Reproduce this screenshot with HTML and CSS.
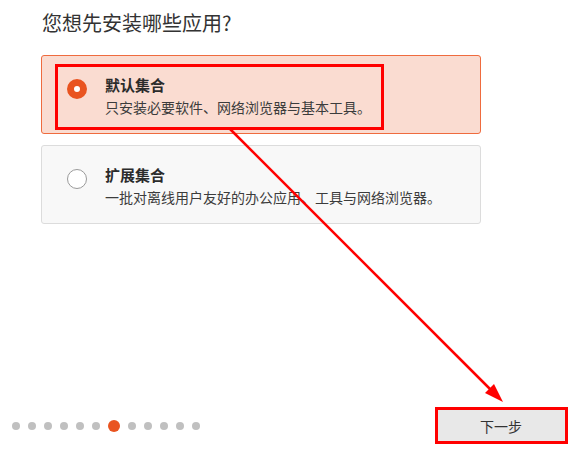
FILE: index.html
```html
<!DOCTYPE html>
<html lang="zh-CN">
<head>
    <meta charset="UTF-8">
    <title>安装应用</title>
    <link rel="stylesheet" href="styles.css">
</head>
<body>
    <div class="page">
        <h1 class="title">您想先安装哪些应用?</h1>

        <div class="option selected">
            <span class="radio"></span>
            <div class="text">
                <div class="name">默认集合</div>
                <div class="desc">只安装必要软件、网络浏览器与基本工具。</div>
            </div>
        </div>

        <div class="option">
            <span class="radio"></span>
            <div class="text">
                <div class="name">扩展集合</div>
                <div class="desc">一批对离线用户友好的办公应用、工具与网络浏览器。</div>
            </div>
        </div>

        <div class="footer">
            <div class="dots">
                <span class="dot"></span><span class="dot"></span><span class="dot"></span>
                <span class="dot"></span><span class="dot"></span><span class="dot"></span>
                <span class="dot active"></span>
                <span class="dot"></span><span class="dot"></span><span class="dot"></span>
                <span class="dot"></span><span class="dot"></span>
            </div>
            <button class="next">下一步</button>
        </div>
    </div>

    <!-- annotations -->
    <div class="mark mark-option"></div>
    <div class="mark mark-next"></div>
    <svg class="arrow" width="574" height="450" viewBox="0 0 574 450">
        <line x1="230" y1="129" x2="494" y2="393" stroke="#ff0000" stroke-width="2.5"/>
        <polygon points="503,402 485,393 494,384" fill="#ff0000"/>
    </svg>
</body>
</html>
```

FILE: styles.css
```css
body {
    margin: 0;
    font-family: "Noto Sans CJK SC", "Noto Sans", sans-serif;
    color: #333;
    background: #fff;
}

.page {
    height: 450px;
    display: flex;
    flex-direction: column;
    padding: 0 0 0 41px;
    box-sizing: border-box;
}

.title {
    margin: 9px 0 18px 1px;
    font-size: 20px;
    line-height: 28px;
    font-weight: normal;
}

.option {
    width: 440px;
    height: 79px;
    box-sizing: border-box;
    display: flex;
    align-items: flex-start;
    padding: 18px 0 0 25px;
    border: 1px solid #dcdcdc;
    border-radius: 3px;
    background: #f8f8f8;
    margin-bottom: 11px;
}

.option.selected {
    background: #fadcd1;
    border-color: #ef6b3e;
}

.radio {
    width: 20px;
    height: 20px;
    box-sizing: border-box;
    border-radius: 50%;
    border: 1px solid #9a9a9a;
    background: #fff;
    margin: 5px 18px 0 0;
    flex-shrink: 0;
}

.selected .radio {
    border: 7px solid #e95420;
}

.name {
    font-size: 15px;
    font-weight: bold;
    line-height: 22px;
    color: #2b2b2b;
}

.desc {
    font-size: 14px;
    line-height: 22px;
    color: #3c3c3c;
}

.footer {
    margin-top: auto;
    margin-left: -41px;
    display: flex;
    align-items: center;
    justify-content: space-between;
    padding: 0 8px 7px 12px;
}

.dots {
    display: flex;
    align-items: center;
    gap: 8px;
}

.dot {
    width: 8px;
    height: 8px;
    border-radius: 50%;
    background: #c0c0c0;
}

.dot.active {
    width: 12px;
    height: 12px;
    background: #e95420;
}

.next {
    width: 130px;
    height: 34px;
    border: none;
    border-radius: 2px;
    background: #e8e8e8;
    font-family: "Noto Sans CJK SC", "Noto Sans", sans-serif;
    font-size: 14px;
    color: #333;
    padding: 0;
}

.mark {
    position: absolute;
    border: 3px solid #ff0000;
    box-sizing: border-box;
}

.mark-option {
    left: 55px;
    top: 64px;
    width: 329px;
    height: 66px;
}

.mark-next {
    left: 435px;
    top: 407px;
    width: 133px;
    height: 37px;
}

.arrow {
    position: absolute;
    left: 0;
    top: 0;
    pointer-events: none;
}
```
